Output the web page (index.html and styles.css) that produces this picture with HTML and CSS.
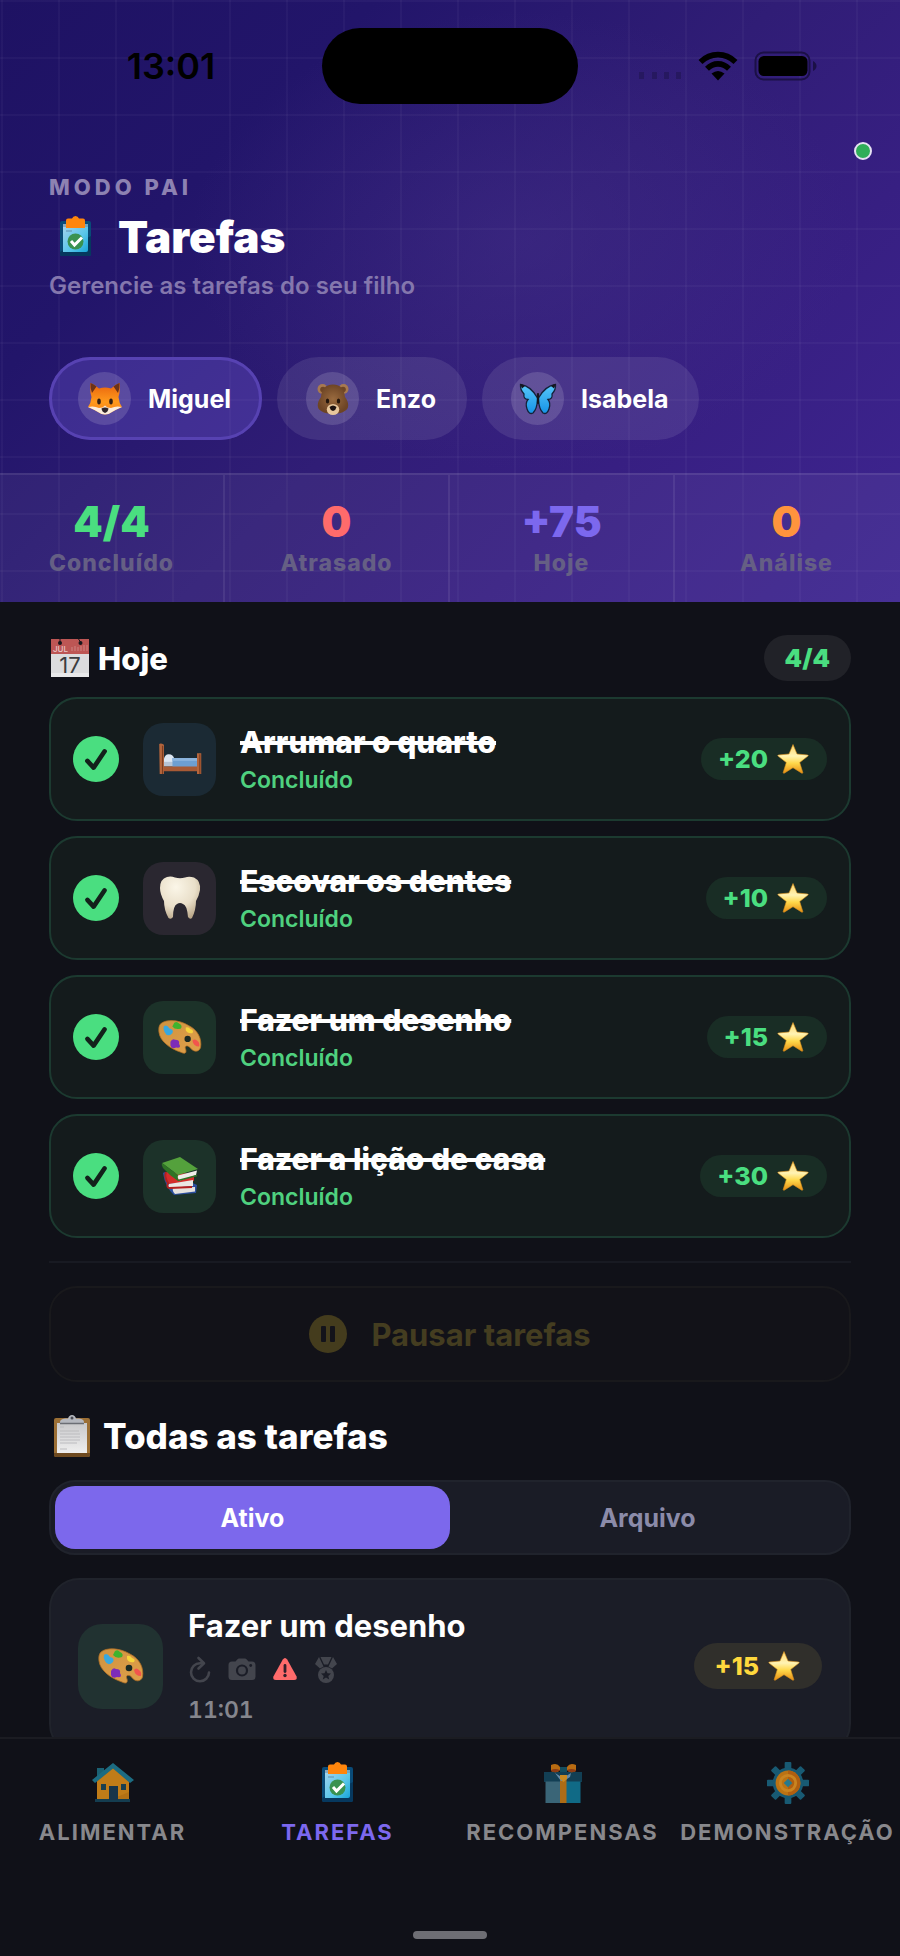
FILE: index.html
```html
<!DOCTYPE html>
<html lang="pt">
<head>
<meta charset="utf-8">
<meta name="viewport" content="width=device-width, initial-scale=1">
<title>Tarefas</title>
<link rel="stylesheet" href="styles.css">
</head>
<body>
<svg class="sprite" aria-hidden="true">
  <defs>
    <linearGradient id="g-star" x1="0" y1="0" x2="0" y2="1"><stop offset="0" stop-color="#ffd568"/><stop offset=".4" stop-color="#fff3b4"/><stop offset=".65" stop-color="#ffd84a"/><stop offset="1" stop-color="#e78e14"/></linearGradient>
    <linearGradient id="g-paper" x1="0" y1="0" x2="1" y2="1"><stop offset="0" stop-color="#a5d5ee"/><stop offset=".6" stop-color="#59c6ea"/><stop offset="1" stop-color="#18a5d8"/></linearGradient>
    <linearGradient id="g-fox" x1="0" y1="0" x2="0" y2="1"><stop offset="0" stop-color="#e8610d"/><stop offset=".6" stop-color="#ff9a1c"/><stop offset="1" stop-color="#f47c12"/></linearGradient>
    <radialGradient id="g-bear"><stop offset="0" stop-color="#9a6b3f"/><stop offset="1" stop-color="#6d4424"/></radialGradient>
    <linearGradient id="g-wing" x1="0" y1="0" x2="0" y2="1"><stop offset="0" stop-color="#58c8fb"/><stop offset="1" stop-color="#1593e6"/></linearGradient>
    <radialGradient id="g-tooth" cx=".4" cy=".25" r=".8"><stop offset="0" stop-color="#fbf6e8"/><stop offset=".6" stop-color="#e9dfc9"/><stop offset="1" stop-color="#b9a688"/></radialGradient>
    <linearGradient id="g-pal" x1="0" y1="0" x2="1" y2="1"><stop offset="0" stop-color="#cf9340"/><stop offset="1" stop-color="#e0a04a"/></linearGradient>
    <linearGradient id="g-sheet" x1="0" y1="0" x2="0" y2="1"><stop offset="0" stop-color="#c9c9cb"/><stop offset="1" stop-color="#efefef"/></linearGradient>
    <symbol id="star" viewBox="0 0 32 32"><path d="M16 1.500 20 11 30.800 12 Q31.500 12.400 31 13L22.700 19.500 25.800 29.500Q25.800 30.500 24.800 30.200L16 24.700 7.200 30.200Q6.200 30.500 6.200 29.500L9.300 19.500 1 13Q.5 12.400 1.200 12L12 11Z" fill="url(#g-star)" stroke="#d98e1c" stroke-width=".6"/></symbol>
    <symbol id="board" viewBox="0 0 32 42"><rect x="0" y="5" width="31" height="35" rx="2" fill="#094b78"/><path d="M0 36 31 20V38Q31 40 29 40H2Q0 40 0 38Z" fill="#06385e"/><path d="M3 8H28V34Q28 36 26 36H3Z" fill="url(#g-paper)"/><path d="M3 8H28V11H3Z" fill="#7d8ea0" opacity=".6"/><path d="M6 15H12" stroke="#5d8fae" stroke-width="1"/><path d="M8 2.500H12Q13 0 15.500 0T19 2.500H23Q25 2.500 25 4.500V12H6V4.500Q6 2.500 8 2.500Z" fill="#ff860c"/><circle cx="15.500" cy="25.500" r="8" fill="#399250"/><path d="M11 25 14.500 29 22 21.500" fill="none" stroke="#fff" stroke-width="3"/></symbol>
    <symbol id="check" viewBox="0 0 48 48"><circle cx="24" cy="24" r="24" fill="#4ade80"/><path d="M15 26 21.500 33 33 16" fill="none" stroke="#13211b" stroke-width="4.800" stroke-linecap="round" stroke-linejoin="round"/></symbol>
    <symbol id="palette" viewBox="0 0 46 36"><path d="M3 4C9-1 22 0 32 6C42 11 46 20 44.500 29C43 34 37 34 34 29.500C31 26 27 27 29 31C30 35 28 36 24 34C12 30 2 22 1 13C.5 9 1 6 3 4Z" fill="url(#g-pal)" stroke="#b06f24" stroke-width=".8"/><circle cx="31" cy="20" r="3.300" fill="#1b2a24"/><path d="M6 7Q9 4 12 9Q17 10 15 14Q10 19 7 13Q5 10 6 7Z" fill="#38a8e0"/><path d="M17 3Q20 1 22 4Q26 6 24 9Q18 11 15 7Z" fill="#3fb32e"/><path d="M29 8Q32 7 34 10Q38 11 36 14Q31 15 29 11Z" fill="#f7d53b"/><path d="M36 22Q38 19 41 22Q44 24 43 28Q37 28 36 22Z" fill="#f2554d"/><path d="M13 23Q15 19 18 21Q23 21 22 25Q25 30 19 29Q14 31 13 27Z" fill="#7d2cb8"/></symbol>
  </defs>
</svg>

<div class="app">
  <header class="header">
    <div class="status">
      <time class="status-time">13:01</time>
      <span class="island"></span>
      <div class="status-icons">
        <svg width="44" height="30" viewBox="0 0 44 30"><g fill="#261860"><rect x="1" y="21" width="5" height="7"/><rect x="14" y="21" width="5" height="7"/><rect x="26" y="21" width="5" height="7"/><rect x="38" y="21" width="5" height="7"/></g></svg>
        <svg width="40" height="30" viewBox="0 0 40 30"><g fill="none" stroke="#000" stroke-width="5.600"><path d="M2.500 11C12.500 1.200 27.500 1.200 37.500 11"/><path d="M9 17.700C15.500 11.300 24.500 11.300 31 17.700"/></g><path d="M13.500 22.500Q20 17.500 26.500 22.500L20 29.500Z"/></svg>
        <svg width="64" height="30" viewBox="0 0 64 30"><rect x="1.500" y="1.500" width="54" height="27" rx="8" fill="none" stroke="#1b1046" stroke-width="2"/><rect x="4.500" y="5" width="49" height="20" rx="5.500"/><path d="M59 10Q62.500 12 62.500 15T59 20Z" fill="#1b1046"/></svg>
      </div>
    </div>
    <span class="online"></span>

    <div class="hero">
      <p class="eyebrow">MODO PAI</p>
      <h1 class="title"><svg width="32" height="42"><use href="#board"/></svg>Tarefas</h1>
      <p class="subtitle">Gerencie as tarefas do seu filho</p>
    </div>

    <div class="kids">
      <button class="kid kid-active" type="button"><span class="avatar">
        <svg width="36" height="34" viewBox="0 0 36 34"><path d="M3.500 1Q9 3 12 6.500Q18 4.500 24 6.500Q27 3 32.500 1Q33.500 9 31.500 15Q32 21 35 25Q28 28 25 30Q18 35 11 30Q8 28 1 25Q4 21 4.500 15Q2.500 9 3.500 1Z" fill="url(#g-fox)"/><path d="M3.500 1Q7 2 9.500 4.500L5 11Q3 6 3.500 1ZM32.500 1Q29 2 26.500 4.500L31 11Q33 6 32.500 1Z" fill="#6b3218"/><path d="M1 25Q7 23.500 12 26Q16 26 18 23.500Q20 26 24 26Q29 23.500 35 25Q28 28 25 30Q18 35 11 30Q8 28 1 25Z" fill="#fbeddc"/><ellipse cx="12" cy="19.500" rx="1.800" ry="3" fill="#332014"/><ellipse cx="24" cy="19.500" rx="1.800" ry="3" fill="#332014"/><path d="M14.500 26.500Q18 24.500 21.500 26.500Q21 30 18 31Q15 30 14.500 26.500Z" fill="#30262a"/></svg></span>Miguel</button>
      <button class="kid" type="button"><span class="avatar">
        <svg width="34" height="34" viewBox="0 0 34 34"><circle cx="6.500" cy="7" r="5" fill="#a87950"/><circle cx="27.500" cy="7" r="5" fill="#a87950"/><circle cx="7" cy="7.500" r="2.800" fill="#6e4525"/><circle cx="27" cy="7.500" r="2.800" fill="#6e4525"/><path d="M17 2.500C25 2.500 28.500 8 29 15C33 20 34 27 28 29.500C24 32.500 10 32.500 6 29.500C0 27 1 20 5 15C5.500 8 9 2.500 17 2.500Z" fill="url(#g-bear)"/><ellipse cx="17" cy="27.500" rx="6.200" ry="5.500" fill="#e8c79c"/><path d="M13.500 25Q17 22 20.500 25Q20 28 17 29Q14 28 13.500 25Z" fill="#1c1210"/><ellipse cx="11.500" cy="19" rx="1.700" ry="2.600" fill="#23150c"/><ellipse cx="22.500" cy="19" rx="1.700" ry="2.600" fill="#23150c"/></svg></span>Enzo</button>
      <button class="kid" type="button"><span class="avatar">
        <svg width="38" height="32" viewBox="0 0 38 32"><g stroke="#14223a" stroke-width="1.300"><path d="M18.500 15Q12 3 1.500 1.500Q1 7 5 11Q4 16 9 16.500Q6 20 8 26Q10 32 14 30Q18 26 18.500 17Z" fill="url(#g-wing)"/><path d="M19.500 15Q26 3 36.500 1.500Q37 7 33 11Q34 16 29 16.500Q32 20 30 26Q28 32 24 30Q20 26 19.500 17Z" fill="url(#g-wing)"/></g><path d="M1 1Q3 .5 6 3L3 5.500ZM37 1Q35 .5 32 3L35 5.500Z" fill="#16171f"/><path d="M19 11V20" stroke="#17161c" stroke-width="2.200" stroke-linecap="round"/></svg></span>Isabela</button>
    </div>

    <dl class="stats">
      <div class="stat"><dd class="stat-value green">4/4</dd><dt class="stat-label">Concluído</dt></div>
      <div class="stat"><dd class="stat-value red">0</dd><dt class="stat-label">Atrasado</dt></div>
      <div class="stat"><dd class="stat-value violet">+75</dd><dt class="stat-label">Hoje</dt></div>
      <div class="stat"><dd class="stat-value orange">0</dd><dt class="stat-label">Análise</dt></div>
    </dl>
  </header>

  <main class="main">
    <section>
      <div class="section-head">
        <h2 class="section-title">
          <svg width="42" height="42" viewBox="0 0 42 42"><path d="M2 2H40V17H2Z" fill="#bd5654"/><path d="M2 17H40V40H2Z" fill="#dcdcdd"/><path d="M2 36H40V40H2Z" fill="#e9e9ea"/><circle cx="11" cy="6" r="2" fill="#17171c"/><circle cx="31.500" cy="6" r="2" fill="#17171c"/><path d="M11 5V2M31.500 5 29.500 2" stroke="#17171c" stroke-width="1"/><text class="cal-month" x="4" y="14.500">JUL</text><path d="M23 10V14M26 9V14M29 10V14M32 9V14M35 8V14M38 8V14" stroke="#c97573" stroke-width="1.500"/><text class="cal-day" x="21" y="36" text-anchor="middle">17</text></svg>
          Hoje</h2>
        <span class="count">4/4</span>
      </div>
      <ul class="tasks">
        <li class="task">
          <svg width="46" height="46"><use href="#check"/></svg>
          <span class="tile tile-blue"><svg width="44" height="34" viewBox="0 0 46 36"><path d="M6 18Q7 13 11 13Q16 13 17 18V25H6Z" fill="#dce6f2"/><path d="M5 21H16V26H5Z" fill="#b6c4d6"/><path d="M15 17H42V27H15Z" fill="#6e9fd1"/><path d="M15 17H42V20H15Z" fill="#8cb4dd"/><path d="M4 26H43V31H4Z" fill="#a85a35"/><path d="M1 2Q3 1 6 3V34H1.500ZM41 12H45.500V34H41Z" fill="#b4653c"/><path d="M4.500 4V34M44 13V34" stroke="#7d3d20" stroke-width="1.200"/></svg></span>
          <div class="task-text"><h3 class="task-name done">Arrumar o quarto</h3><p class="task-state">Concluído</p></div>
          <span class="points">+20 <svg width="32" height="32"><use href="#star"/></svg></span>
        </li>
        <li class="task">
          <svg width="46" height="46"><use href="#check"/></svg>
          <span class="tile tile-plum"><svg width="42" height="44" viewBox="0 0 42 44"><path d="M8 1Q12 0 16 1.500Q21 3 26 1.500Q30 0 35 1.500Q42 5 41 14Q40 20 37 25Q37 34 33 42Q31 44 29 41Q28 29 24 28Q21 26 18 28Q14 30 14 41Q12 44 9.500 42Q5 34 5 25Q1 18 1 12Q1 3 8 1Z" fill="url(#g-tooth)"/></svg></span>
          <div class="task-text"><h3 class="task-name done">Escovar os dentes</h3><p class="task-state">Concluído</p></div>
          <span class="points">+10 <svg width="32" height="32"><use href="#star"/></svg></span>
        </li>
        <li class="task">
          <svg width="46" height="46"><use href="#check"/></svg>
          <span class="tile tile-green"><svg width="44" height="36"><use href="#palette"/></svg></span>
          <div class="task-text"><h3 class="task-name done">Fazer um desenho</h3><p class="task-state">Concluído</p></div>
          <span class="points">+15 <svg width="32" height="32"><use href="#star"/></svg></span>
        </li>
        <li class="task">
          <svg width="46" height="46"><use href="#check"/></svg>
          <span class="tile tile-green"><svg width="38" height="38" viewBox="0 0 38 38"><path d="M2 16Q4 14 10 16L36 28 35 36 13 38Q4 30 2 16Z" fill="#2c4f9e"/><path d="M12 31 34 30V34.500L14 37Q11 34 12 31Z" fill="#e6e3df"/><path d="M4 15 33 17 33 24 8 27Q4 20 4 15Z" fill="#d42d2b"/><path d="M8 27 32 23V29L9 31Q6 29 8 27Z" fill="#ebe8e4"/><path d="M5 15Q3 20 7 26Q5 31 9 31L31 30" fill="none" stroke="#b42020" stroke-width="2"/><path d="M1 6 19 0 37 12 17 18Z" fill="#54a13c"/><path d="M1 6 17 18V24Q9 19 2 11Q0 8 1 6Z" fill="#2f7425"/><path d="M17 18.500 36 13.500 35 18 19 23.500Q16 21.500 17 18.500Z" fill="#efeee9"/><path d="M17 23.500 36 18.500" stroke="#2f7425" stroke-width="1.300"/></svg></span>
          <div class="task-text"><h3 class="task-name done">Fazer a lição de casa</h3><p class="task-state">Concluído</p></div>
          <span class="points">+30 <svg width="32" height="32"><use href="#star"/></svg></span>
        </li>
      </ul>
    </section>

    <hr class="rule">
    <button class="pause" type="button">
      <svg width="38" height="38" viewBox="0 0 38 38"><circle cx="19" cy="19" r="19" fill="#443c1d"/><path d="M12 12Q12 11 13 11H16Q17 11 17 12V26Q17 27 16 27H13Q12 27 12 26ZM21 12Q21 11 22 11H25Q26 11 26 12V26Q26 27 25 27H22Q21 27 21 26Z" fill="#13131a"/></svg>
      Pausar tarefas</button>

    <section>
      <h2 class="all-title">
        <svg width="46" height="44" viewBox="0 0 46 44"><rect x="5" y="4" width="36" height="39" rx="2" fill="#9b6f35"/><path d="M5 39H41V41Q41 43 39 43H7Q5 43 5 41Z" fill="#6e4a20"/><rect x="8" y="9" width="30" height="30" fill="url(#g-sheet)"/><path d="M11 13H15M11 17H30M11 20H31M11 23H31M11 26H31M11 29H28M11 35H18" stroke="#bcbcbf" stroke-width="1"/><path d="M11 8Q11 5 16 4.500H19Q20 1 23 1T27 4.500H30Q35 5 35 8V10H11Z" fill="#b5b8bf"/><path d="M11 9.500H35" stroke="#6b6e75" stroke-width="1.500"/><circle cx="23" cy="4" r="1.500" fill="#4a4c55"/></svg>
        Todas as tarefas</h2>
      <div class="segments">
        <button class="segment segment-active" type="button">Ativo</button>
        <button class="segment" type="button">Arquivo</button>
      </div>
      <article class="entry">
        <span class="tile tile-large"><svg width="46" height="36"><use href="#palette"/></svg></span>
        <div class="entry-text">
          <h3 class="task-name">Fazer um desenho</h3>
          <div class="flags">
            <svg width="24" height="28" viewBox="0 0 24 28"><path d="M14 7.300H12A9 9 0 1 0 21 16.500" fill="none" stroke="#43454d" stroke-width="2.600" stroke-linecap="round"/><path d="M10.500 2 16 7.300 10.500 12.500" fill="none" stroke="#43454d" stroke-width="2.600" stroke-linecap="round" stroke-linejoin="round"/></svg>
            <svg width="28" height="28" viewBox="0 0 28 28"><path d="M4 5.500H7.500L9.500 3.200Q10.200 2.500 11 2.500H17Q17.800 2.500 18.500 3.200L20.500 5.500H24Q27.500 5.500 27.500 9V20.500Q27.500 24 24 24H4Q.5 24 .5 20.500V9Q.5 5.500 4 5.500Z" fill="#43454d"/><circle cx="14" cy="14.500" r="5" fill="#43454d" stroke="#1b1d27" stroke-width="2.200"/><circle cx="22.700" cy="9.500" r="1.400" fill="#1b1d27"/></svg>
            <svg width="26" height="28" viewBox="0 0 26 28"><path d="M10.800 3.500Q13 .5 15.200 3.500L24.600 20.500Q25.500 24 22 24H4Q.5 24 1.400 20.500Z" fill="#ff6b6b"/><path d="M13 9.500V15.500" stroke="#32202b" stroke-width="2.800" stroke-linecap="round"/><circle cx="13" cy="19.500" r="1.700" fill="#32202b"/></svg>
            <svg width="24" height="28" viewBox="0 0 24 28"><path d="M5 1 1 8 6 12.500 9.500 10.500ZM19 1 23 8 18 12.500 14.500 10.500ZM6.500 1H17.500L14 8.500H10Z" fill="#43454d"/><circle cx="12" cy="19" r="8" fill="#43454d"/><path d="M12 14 13.500 17.300 17 17.600 14.300 20 15.200 23.500 12 21.600 8.800 23.500 9.700 20 7 17.600 10.500 17.300Z" fill="#1b1d27"/></svg>
          </div>
          <time class="entry-time">11:01</time>
        </div>
        <span class="points points-gold">+15 <svg width="32" height="32"><use href="#star"/></svg></span>
      </article>
    </section>
  </main>

  <nav class="tabs">
    <a class="tab" href="#alimentar"><svg width="42" height="42" viewBox="0 0 42 42"><path d="M5 6H12V14L5 19Z" fill="#1b6173"/><path d="M21 4 37 18V38H5V18Z" fill="#b37114"/><path d="M5 20 21 6 37 20V30Q20 38 5 38Z" fill="#c07c18"/><path d="M21 1 42 18 38 21 21 6.500 3 21 0 18Z" fill="#1c6c82"/><path d="M3 37H38V40H3Z" fill="#143d50"/><rect x="17" y="24" width="9" height="14" fill="#17344a"/><rect x="9" y="22" width="5" height="6" fill="#183f50"/><rect x="29" y="22" width="5" height="6" fill="#183f50"/></svg>ALIMENTAR</a>
    <a class="tab tab-active" href="#tarefas" aria-current="page"><svg width="42" height="42"><use href="#board"/></svg>TAREFAS</a>
    <a class="tab" href="#recompensas"><svg width="42" height="42" viewBox="0 0 42 42"><path d="M2 10H40V20H2Z" fill="#123f54"/><path d="M3.500 19.500H21V41H3.500Z" fill="#3a6577"/><path d="M21 19.500H38.500V41H21Z" fill="#106a86"/><path d="M18 14H24.500V41H18Z" fill="#ad6c16"/><path d="M13 11 21 16 29 11 28 15 22 19H19Z" fill="#678ba8"/><path d="M9 3Q15 0 18 5V8Q15 12 9 9ZM34 3Q28 0 25 5V8Q28 12 34 9Z" fill="#b96c12"/><path d="M9 8Q13 6 18 8Q14 12 9 9ZM34 8Q29 6 25 8Q28 12 34 9Z" fill="#8c3b14"/><rect x="18" y="5" width="7" height="5" fill="#154e5e"/><path d="M18 13H25V17L21.500 20 18 17Z" fill="#c98a22"/></svg>RECOMPENSAS</a>
    <a class="tab" href="#demonstracao"><svg width="44" height="42" viewBox="0 0 44 44"><g fill="#185a73"><rect x="18.500" y="0" width="7" height="44" rx="1"/><rect x="18.500" y="0" width="7" height="44" rx="1" transform="rotate(45 22 22)"/><rect x="18.500" y="0" width="7" height="44" rx="1" transform="rotate(90 22 22)"/><rect x="18.500" y="0" width="7" height="44" rx="1" transform="rotate(135 22 22)"/><circle cx="22" cy="22" r="16"/></g><circle cx="22" cy="22" r="13" fill="#bb7314"/><path d="M22 9A13 13 0 0 1 22 35Z" fill="#b05f10"/><circle cx="22" cy="22" r="8" fill="none" stroke="#c98420" stroke-width="3"/><path d="M22 17.500 26.500 22 22 26.500 17.500 22Z" fill="#27798c"/></svg>DEMONSTRAÇÃO</a>
    <span class="home-bar"></span>
  </nav>
</div>
</body>
</html>
```

FILE: styles.css
```css
* { box-sizing: border-box; margin: 0; padding: 0; }

body {
  background: #101118;
  color: #fff;
  font-family: Inter, "Liberation Sans", sans-serif;
}

button { font: inherit; color: inherit; border: 0; background: none; cursor: pointer; }
svg { display: block; flex: none; }
.sprite { position: absolute; width: 0; height: 0; }

.app { display: flex; flex-direction: column; height: 100vh; overflow: hidden; }

/* Header */
.header {
  position: relative;
  flex: none;
  background-image:
    linear-gradient(90deg, rgba(255, 255, 255, .03) 2px, transparent 2px),
    linear-gradient(rgba(255, 255, 255, .03) 2px, transparent 2px),
    radial-gradient(ellipse at 58% 40%, rgba(70, 50, 140, .4), transparent 45%),
    linear-gradient(135deg, #1e1263 0%, #22156a 25%, #301d76 52%, #371f82 72%, #3e2591 100%);
  background-size: 57px 57px, 57px 57px, auto, auto;
  background-position: 1px 0, 0 0, 0 0, 0 0;
}

.status {
  display: grid;
  grid-template-columns: 1fr 256px 1fr;
  align-items: center;
  height: 132px;
}
.status-time { padding-left: 20px; text-align: center; color: #000; font-size: 36px; font-weight: 600; }
.island { height: 76px; border-radius: 38px; background: #000; }
.status-icons { display: flex; gap: 16px; padding-left: 60px; }

.online {
  position: absolute;
  top: 142px;
  right: 28px;
  width: 18px;
  height: 18px;
  border: 2px solid #e5e1f3;
  border-radius: 50%;
  background: #2fae58;
}

.hero { padding: 41px 49px 0; }
.eyebrow { color: #8d82b2; font-size: 22px; font-weight: 800; line-height: 28px; letter-spacing: 4px; }
.title {
  display: flex;
  align-items: center;
  gap: 26px;
  margin-top: 12px;
  padding-left: 11px;
  font-size: 44px;
  font-weight: 900;
  line-height: 48px;
}
.subtitle { margin-top: 10px; color: #8477ad; font-size: 24px; font-weight: 600; line-height: 30px; }

.kids { display: flex; gap: 15px; padding: 56px 49px 33px; }
.kid {
  display: flex;
  align-items: center;
  gap: 17px;
  height: 83px;
  padding: 0 31px 0 29px;
  border-radius: 42px;
  background: rgba(255, 255, 255, .09);
  font-size: 25px;
  font-weight: 700;
}
.kid-active { background: rgba(124, 104, 238, .28); box-shadow: inset 0 0 0 3px #5742b2; }
.avatar {
  display: flex;
  align-items: center;
  justify-content: center;
  width: 53px;
  height: 53px;
  border-radius: 50%;
  background: rgba(255, 255, 255, .14);
}

.stats {
  display: grid;
  grid-template-columns: repeat(4, 1fr);
  border-top: 2px solid rgba(255, 255, 255, .09);
  background: rgba(255, 255, 255, .05);
}
.stat { display: flex; flex-direction: column; align-items: center; gap: 5px; padding: 25px 0; border-right: 2px solid rgba(255, 255, 255, .08); }
.stat:last-child { border-right-color: transparent; }
.stat-value { font-size: 42px; font-weight: 900; line-height: 44px; }
.stat-label { color: #655f84; font-size: 23px; font-weight: 800; line-height: 28px; letter-spacing: 1px; }
.green { color: #4ade80; }
.red { color: #ff6b6b; }
.violet { color: #7c68ee; }
.orange { color: #ff943d; }

/* Content */
.main { flex: 1; min-height: 0; overflow: hidden; padding: 33px 49px 0; }

.section-head { display: flex; align-items: center; justify-content: space-between; height: 46px; margin-bottom: 16px; }
.section-title { display: flex; align-items: center; gap: 7px; font-size: 31px; font-weight: 800; }
.cal-month { font-size: 8px; font-weight: 500; fill: #e8c5c5; }
.cal-day { font-size: 22px; font-weight: 400; fill: #3c3c40; }
.count {
  padding: 0 21px;
  border-radius: 23px;
  background: #212228;
  color: #4ade80;
  font-size: 25px;
  font-weight: 900;
  line-height: 46px;
}

.tasks { display: flex; flex-direction: column; gap: 15px; list-style: none; }
.task {
  display: flex;
  align-items: center;
  gap: 24px;
  height: 124px;
  padding: 0 22px;
  border: 2px solid #1c3a30;
  border-radius: 28px;
  background: #141b1c;
}
.tile {
  display: flex;
  flex: none;
  align-items: center;
  justify-content: center;
  width: 73px;
  height: 73px;
  border-radius: 20px;
}
.tile-blue { background: #1b2a34; }
.tile-plum { background: #2a2730; }
.tile-green { background: #1c3229; }
.tile-large { width: 85px; height: 85px; border-radius: 24px; background: #213231; }

.task-text, .entry-text { flex: 1; min-width: 0; display: flex; flex-direction: column; gap: 6px; }
.task-name { font-size: 31px; font-weight: 700; line-height: 36px; }
.done { align-self: flex-start; font-size: 30px; font-weight: 800; text-decoration: line-through; text-decoration-thickness: 4px; text-decoration-skip-ink: none; }
.task-state { color: #4fd17f; font-size: 23px; font-weight: 600; line-height: 28px; }

.points {
  display: flex;
  align-items: center;
  gap: 9px;
  height: 42px;
  padding: 0 18px 0 17px;
  border-radius: 21px;
  background: #192d25;
  color: #4ade80;
  font-size: 25px;
  font-weight: 800;
}
.points-gold { height: 46px; padding: 0 22px 0 21px; border-radius: 23px; background: #302f2b; color: #ffd93d; }

.rule { height: 2px; margin: 23px 0; border: 0; background: #181a22; }
.pause {
  display: flex;
  align-items: center;
  justify-content: center;
  gap: 24px;
  width: 100%;
  height: 96px;
  border: 2px solid #19191c;
  border-radius: 28px;
  background: #121218;
  color: #443d20;
  font-size: 31px;
  font-weight: 700;
}

.all-title { display: flex; align-items: center; gap: 8px; margin: 32px 0 22px; font-size: 35px; font-weight: 800; line-height: 44px; }

.segments {
  display: grid;
  grid-template-columns: 1fr 1fr;
  height: 75px;
  padding: 4px;
  border: 2px solid #20232c;
  border-radius: 26px;
  background: #1a1c26;
}
.segment { border-radius: 20px; color: #8b8ba9; font-size: 25px; font-weight: 700; }
.segment-active { background: #7c68ec; color: #fff; }

.entry {
  display: flex;
  align-items: center;
  gap: 25px;
  margin-top: 23px;
  padding: 28px 27px;
  border: 2px solid #20232b;
  border-radius: 30px;
  background: #1b1d27;
}
.entry-text { gap: 12px; }
.flags { display: flex; gap: 16px; }
.entry-time { color: #85868d; font-size: 23px; font-weight: 600; line-height: 28px; font-variant-numeric: tabular-nums; }

/* Bottom bar */
.tabs {
  position: relative;
  display: grid;
  flex: none;
  grid-template-columns: repeat(4, 1fr);
  height: 219px;
  padding-top: 23px;
  border-top: 2px solid #1b1c22;
  background: #101118;
}
.tab {
  display: flex;
  flex-direction: column;
  align-items: center;
  gap: 14px;
  min-width: 0;
  color: #88888c;
  font-size: 22px;
  font-weight: 700;
  line-height: 28px;
  letter-spacing: 2px;
  text-decoration: none;
}
.tab-active { color: #7c68ee; }
.home-bar {
  position: absolute;
  bottom: 17px;
  left: 50%;
  width: 74px;
  height: 8px;
  margin-left: -37px;
  border-radius: 4px;
  background: #6e6e74;
}
```
